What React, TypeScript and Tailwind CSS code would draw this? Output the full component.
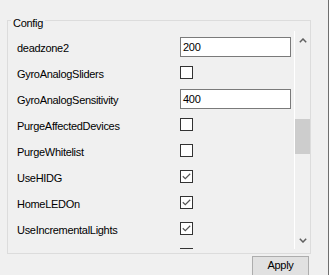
import React from "react";

type Row = { label: string; kind: "text" | "check"; value?: string; checked?: boolean };

const rows: Row[] = [
  { label: "deadzone2", kind: "text", value: "200" },
  { label: "GyroAnalogSliders", kind: "check", checked: false },
  { label: "GyroAnalogSensitivity", kind: "text", value: "400" },
  { label: "PurgeAffectedDevices", kind: "check", checked: false },
  { label: "PurgeWhitelist", kind: "check", checked: false },
  { label: "UseHIDG", kind: "check", checked: true },
  { label: "HomeLEDOn", kind: "check", checked: true },
  { label: "UseIncrementalLights", kind: "check", checked: true },
  { label: "", kind: "check", checked: false },
];

function CheckBox({ checked }: { checked?: boolean }) {
  return (
    <div className="mt-[6px] w-[13px] h-[13px] border border-[#333333] bg-white relative">
      {checked && (
        <svg width="13" height="13" viewBox="0 0 13 13" className="absolute left-[-1px] top-[-1px]">
          <path d="M2.8 6.2 L5.3 8.6 L10.2 3.8" fill="none" stroke="#555555" strokeWidth="1.2" />
        </svg>
      )}
    </div>
  );
}

function TextBox({ value }: { value?: string }) {
  return (
    <div className="mt-[3px] w-[111px] h-[20px] border border-[#7a7a7a] bg-white pl-[2px] flex items-center text-black leading-[13px]">
      {value}
    </div>
  );
}

function Chevron({ down }: { down?: boolean }) {
  return (
    <svg width="8" height="5" viewBox="0 0 8 5">
      <path
        d={down ? "M0.8 0.8 L4 4 L7.2 0.8" : "M0.8 4.2 L4 1 L7.2 4.2"}
        fill="none"
        stroke="#606060"
        strokeWidth="1.5"
      />
    </svg>
  );
}

export default function App() {
  return (
    <div className="w-[329px] h-[275px] bg-[#f0f0f0] border-r border-[#6e6e6e] overflow-hidden pt-[20px] font-['Liberation_Sans',Arial,sans-serif] text-[11px] tracking-[-0.3px] text-black">
      <div className="ml-[7px] w-[304px] h-[234px] border border-[#dcdcdc] relative">
        <div className="absolute left-[3px] top-[-4px] px-[2px] bg-[#f0f0f0] leading-[13px]">Config</div>
        <div className="mt-[10px] -mr-[1px] h-[218px] flex">
          <div className="w-[286px] h-full overflow-hidden pt-[3px]">
            {rows.map((r, i) => (
              <div key={i} className="h-[26px] flex items-start pl-[9px]">
                <div className="w-[163px] mt-[8px] leading-[13px] whitespace-nowrap">{r.label}</div>
                {r.kind === "text" ? <TextBox value={r.value} /> : <CheckBox checked={r.checked} />}
              </div>
            ))}
          </div>
          <div className="w-[17px] h-full border-l border-white flex flex-col">
            <div className="h-[17px] flex items-center justify-center pt-[1px]">
              <Chevron />
            </div>
            <div className="flex-1">
              <div className="mt-[71px] w-[15px] h-[35px] bg-[#cdcdcd]" />
            </div>
            <div className="h-[17px] flex items-center justify-center">
              <Chevron down />
            </div>
          </div>
        </div>
      </div>
      <div className="mt-[2px] flex justify-end pr-[19px]">
        <div className="w-[57px] h-[23px] border border-[#adadad] bg-[#e1e1e1] flex justify-center pt-[2px] leading-[13px]">
          Apply
        </div>
      </div>
    </div>
  );
}
